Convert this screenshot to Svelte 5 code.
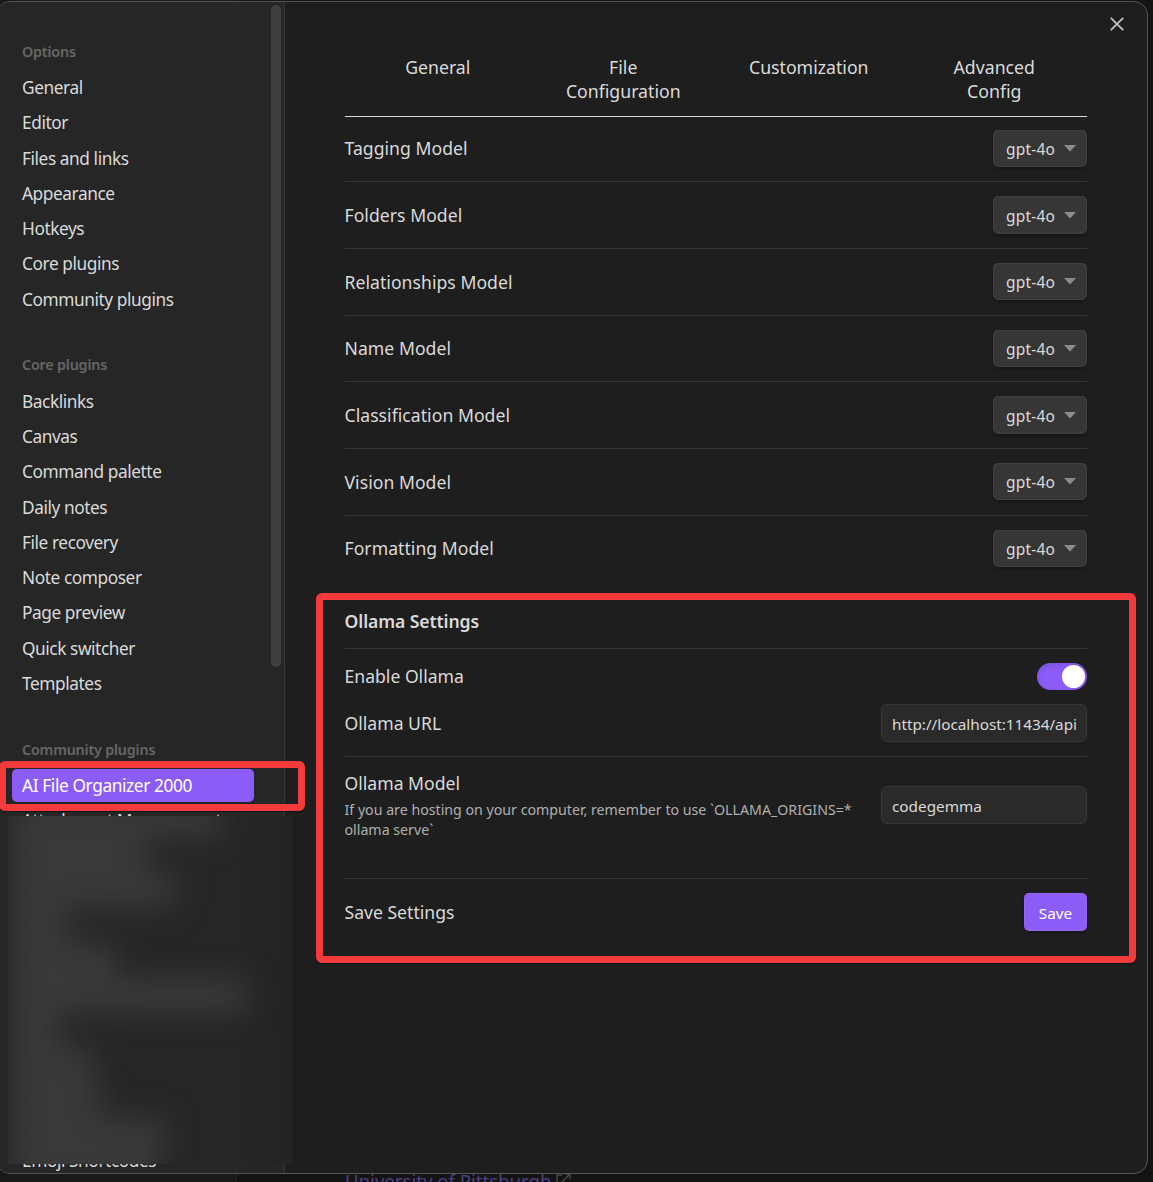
<script>
  const groups = [
    { title: 'Options', items: ['General', 'Editor', 'Files and links', 'Appearance', 'Hotkeys', 'Core plugins', 'Community plugins'] },
    { title: 'Core plugins', items: ['Backlinks', 'Canvas', 'Command palette', 'Daily notes', 'File recovery', 'Note composer', 'Page preview', 'Quick switcher', 'Templates'] },
    { title: 'Community plugins', items: ['AI File Organizer 2000', 'Attachment Management'] }
  ];
  const active = 'AI File Organizer 2000';
  const tabs = ['General', 'File Configuration', 'Customization', 'Advanced Config'];
  const models = ['Tagging', 'Folders', 'Relationships', 'Name', 'Classification', 'Vision', 'Formatting'];
  // Widths of the obscured sidebar entries
  const hidden = [208, 134, 164, 54, 104, 234, 48, 82, 88, 153, 146];
  let url = 'http://localhost:11434/api';
  let model = 'codegemma';
</script>

<div class="screen">
  <div class="backdrop">
    <div class="backdrop-side"></div>
    <div class="backdrop-link">
      <span>University of Pittsburgh</span>
      <svg width="15" height="15" viewBox="0 0 15 15" fill="none" stroke="#4a4a4a" stroke-width="1.4">
        <path d="M6 2H1v12h11V9M9 1h5v5M14 1L6 9" />
      </svg>
    </div>
  </div>

  <div class="modal">
    <aside>
      {#each groups as g}
        <section>
          <h4>{g.title}</h4>
          {#each g.items as item}
            <div class="nav" class:active={item === active}><span>{item}</span></div>
          {/each}
        </section>
      {/each}
      <div class="nav last"><span>Emoji Shortcodes</span></div>
      <div class="scrollbar"></div>
    </aside>

    <main>
      <nav>
        {#each tabs as t}<div class="tab">{t}</div>{/each}
      </nav>
      <div class="models">
        {#each models as m}
          <div class="row">
            <span class="label">{m} Model</span>
            <div class="select">
              <span>gpt-4o</span>
              <svg width="12" height="7" viewBox="0 0 12 7"><path d="M0 0h12L6 6.6z" fill="#8c8c8c" /></svg>
            </div>
          </div>
        {/each}
      </div>
      <div class="row heading"><span class="label">Ollama Settings</span></div>
      <div class="row enable">
        <span class="label">Enable Ollama</span>
        <div class="toggle"><i></i></div>
      </div>
      <div class="row">
        <span class="label">Ollama URL</span>
        <input type="text" class="url" bind:value={url} />
      </div>
      <div class="row model">
        <div class="info">
          <div class="label">Ollama Model</div>
          <div class="desc">If you are hosting on your computer, remember to use `OLLAMA_ORIGINS=*<br />ollama serve`</div>
        </div>
        <input type="text" bind:value={model} />
      </div>
      <div class="row save">
        <span class="label">Save Settings</span>
        <button>Save</button>
      </div>
    </main>

    <svg class="close" width="14" height="14" viewBox="0 0 14 14" fill="none" stroke="#c4bdb6" stroke-width="1.9">
      <path d="M.8.8l12.4 12.4M13.2.8L.8 13.2" />
    </svg>
  </div>

  <div class="redacted">
    <div class="smudges">
      {#each hidden as w}<div class="smudge" style="width: {w}px"></div>{/each}
    </div>
  </div>
  <div class="mark mark-nav"></div>
  <div class="mark mark-main"></div>
</div>

<style>
  :global(body) { background: #131313; overflow: hidden; }
  .screen, .screen * { box-sizing: border-box; }
  .screen {
    position: relative;
    width: 1153px;
    height: 1182px;
    overflow: hidden;
    background: #131313;
    color: #dadada;
    font-family: "Noto Sans", "Open Sans", sans-serif;
    font-size: 17.3px;
    white-space: nowrap;
  }
  .backdrop { position: absolute; inset: 0; display: flex; }
  .backdrop-side { width: 237px; background: #191919; border-right: 1px solid #232323; }
  .backdrop-link {
    display: flex;
    align-items: center;
    gap: 5px;
    height: 24px;
    margin: 1168px 0 0 108px;
    color: #4f3f80;
    font-size: 18.6px;
  }
  .backdrop-link svg { margin-top: 1px; }

  .modal {
    position: absolute;
    left: -4px;
    top: 1px;
    width: 1152px;
    height: 1173px;
    display: flex;
    overflow: hidden;
    background: #1e1e1e;
    border: 1px solid #555;
    border-radius: 14px;
  }
  aside {
    position: relative;
    flex: none;
    display: flex;
    flex-direction: column;
    width: 288px;
    padding: 37.6px 0 0 15px;
    background: #262626;
    border-right: 1px solid #363636;
    letter-spacing: -0.43px;
  }
  section { display: flex; flex-direction: column; margin-bottom: 35.4px; }
  h4 {
    margin: 0 0 7.5px;
    padding-left: 10px;
    font-size: 14.3px;
    font-weight: 600;
    line-height: 24px;
    letter-spacing: -0.18px;
    color: #666;
  }
  .nav {
    display: flex;
    flex: none;
    align-items: center;
    width: 242px;
    height: 33px;
    margin-bottom: 2.28px;
    padding-left: 10px;
    border-radius: 5px;
  }
  .nav.active { background: #8b5cf6; color: #fff; letter-spacing: -0.38px; }
  .nav.last { margin-top: 268.6px; }
  .scrollbar {
    position: absolute;
    right: 3px;
    top: 3px;
    width: 10px;
    height: 662px;
    border-radius: 5px;
    background: #3f3f3f;
  }

  main { flex: none; width: 802px; padding: 53px 0 0 60px; }
  nav {
    display: grid;
    grid-template-columns: repeat(4, 1fr);
    height: 62px;
    border-bottom: 1px solid #dadada;
  }
  .tab { padding: 0 30px; text-align: center; font-size: 17.7px; line-height: 24px; white-space: normal; }
  .models { margin-top: -1.4px; }
  .row {
    display: flex;
    align-items: center;
    justify-content: space-between;
    height: 66.67px;
    border-bottom: 1px solid #363636;
  }
  .models .row:last-child { border-color: transparent; }
  .label { font-size: 17.6px; line-height: 24px; margin-left: -0.5px; }
  .models .label { margin-top: -0.3px; letter-spacing: 0.04px; }
  .select {
    display: flex;
    align-items: center;
    justify-content: space-between;
    width: 94px;
    height: 37.3px;
    padding: 1.3px 11px 0 13px;
    border-radius: 6px;
    background: #363636;
    box-shadow: inset 0 0 0 1px #404040, inset 0 1px 0 #4a4a4a, 0 2px 3px rgba(0, 0, 0, .3);
    font-size: 15.5px;
    letter-spacing: 0.2px;
  }
  .select svg { margin-bottom: 1.4px; }
  .heading { height: 66.9px; padding-top: 12px; }
  .heading .label { font-weight: 600; letter-spacing: -0.1px; }
  .enable { height: 41px; padding-top: 14px; border: 0; }
  .enable .label { margin-top: -1.5px; }
  .toggle {
    display: flex;
    justify-content: flex-end;
    width: 50px;
    height: 27px;
    padding: 2px;
    border-radius: 14px;
    background: #8b5cf6;
    box-shadow: inset 0 2px 5px rgba(0, 0, 0, .12);
  }
  .toggle i { width: 23px; height: 23px; border-radius: 50%; background: #fff; }
  input {
    width: 206px;
    height: 38px;
    padding: 3px 9px 0 10px;
    border: 1px solid #363636;
    border-radius: 6px;
    background: #2a2a2a;
    color: #dadada;
    font: inherit;
    font-size: 15.3px;
    letter-spacing: 0;
  }
  input.url { letter-spacing: -0.02px; }
  .model { align-items: flex-start; height: 122px; padding-top: 14px; }
  .model input { margin-top: 15px; }
  .desc { margin: 5px 0 0 -0.5px; font-size: 14.2px; line-height: 20px; color: #b0b0b0; }
  .save { border: 0; }
  button {
    width: 63px;
    height: 38px;
    padding: 2px 0 0;
    border: 0;
    border-radius: 5px;
    background: #8b5cf6;
    box-shadow: inset 0 0 0 1px rgba(255, 255, 255, .07), 0 2px 3px rgba(0, 0, 0, .35);
    color: #fff;
    font: inherit;
    font-size: 15.3px;
  }
  .close { position: absolute; right: 23px; top: 15px; }

  .redacted {
    position: absolute;
    left: 8px;
    top: 816px;
    width: 285px;
    height: 348px;
    overflow: hidden;
    background: linear-gradient(90deg, #262626 230px, #232323);
  }
  .smudges {
    display: flex;
    flex-direction: column;
    gap: 3px;
    margin-top: -12px;
    padding-left: 4px;
    filter: blur(15px);
  }
  .smudge { height: 32px; background: #3b3b3b; }
  .mark { position: absolute; border: 7px solid #f43b3b; border-radius: 6px; box-shadow: 0 1px 1px rgba(0, 0, 0, .5); }
  .mark-nav { left: -1px; top: 761px; width: 306px; height: 50px; }
  .mark-main { left: 316px; top: 593px; width: 820px; height: 370px; }
</style>
